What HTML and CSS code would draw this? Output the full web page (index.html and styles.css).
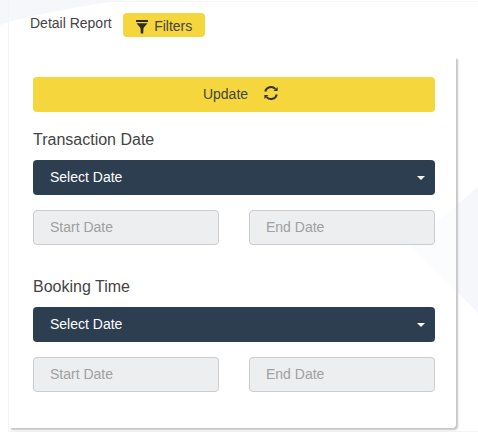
FILE: index.html
```html
<!DOCTYPE html>
<html lang="en">
<head>
    <meta charset="UTF-8">
    <title>Detail Report</title>
    <link rel="stylesheet" href="styles.css">
</head>
<body>
    <svg class="bg-shape" width="478" height="445" viewBox="0 0 478 445">
        <path d="M0 0H125C80 6 35 14 0 25Z" fill="#f6f7fa"></path>
        <polygon points="478,187 410,245 478,313" fill="#f6f7fb"></polygon>
    </svg>
    <div class="panel">
        <div class="tabs">
            <span class="tab-title">Detail Report</span>
            <button class="btn-filters">
                <svg class="icon-filter" width="12" height="14" viewBox="0 0 12 14">
                    <rect x="0" y="0" width="12" height="2" fill="#2b2b2b"></rect>
                    <polygon points="0.5,3.2 11.5,3.2 7.5,8 7.2,13.5 4.8,13.5 4.5,8" fill="#2b2b2b"></polygon>
                </svg>
                <span>Filters</span>
            </button>
        </div>
        <div class="card">
            <button class="btn-update">
                <span>Update</span>
                <svg class="icon-sync" width="16" height="16" viewBox="0 0 16 16">
                    <path d="M2.2 6.6A6 6 0 0 1 12.4 3.9" fill="none" stroke="#333" stroke-width="2"></path>
                    <polygon points="14.6,1.9 14.6,5.9 10.6,5.9" fill="#333"></polygon>
                    <path d="M13.8 9.4A6 6 0 0 1 3.6 12.1" fill="none" stroke="#333" stroke-width="2"></path>
                    <polygon points="1.4,14.1 1.4,10.1 5.4,10.1" fill="#333"></polygon>
                </svg>
            </button>

            <div class="group">
                <div class="group-label">Transaction Date</div>
                <div class="select">Select Date<span class="caret"></span></div>
                <div class="date-row">
                    <input class="date-input" placeholder="Start Date" disabled>
                    <input class="date-input" placeholder="End Date" disabled>
                </div>
            </div>

            <div class="group">
                <div class="group-label">Booking Time</div>
                <div class="select">Select Date<span class="caret"></span></div>
                <div class="date-row">
                    <input class="date-input" placeholder="Start Date" disabled>
                    <input class="date-input" placeholder="End Date" disabled>
                </div>
            </div>
        </div>
    </div>
</body>
</html>
```

FILE: styles.css
```css
* {
    margin: 0;
    padding: 0;
    box-sizing: border-box;
}

html,
body {
    height: 445px;
    overflow: hidden;
}

body {
    background: #fff;
    font-family: "Liberation Sans", Arial, sans-serif;
    font-size: 14px;
    color: #444;
    position: relative;
}

.bg-shape {
    position: absolute;
    left: 0;
    top: 0;
}

.panel {
    position: relative;
    margin: 1px 0 0 8px;
    width: 470px;
    height: 431px;
    border-top: 1px solid #f6f6f8;
    border-left: 1px solid #f4f4f6;
    border-bottom: 1px solid #f4f4f6;
}

.tabs {
    height: 55px;
    padding: 11px 0 0 21px;
    display: flex;
    align-items: flex-start;
    gap: 11px;
}

.tab-title {
    line-height: 20px;
}

.btn-filters {
    width: 82px;
    height: 24px;
    padding-top: 1px;
    border: 0;
    border-radius: 4px;
    background: #f5d63d;
    font: 14px "Liberation Sans", Arial, sans-serif;
    color: #444;
    display: flex;
    align-items: center;
    justify-content: center;
    gap: 6px;
}

.icon-filter {
    margin: 2px 0 0 1px;
}

.card {
    width: 447px;
    height: 371px;
    background: rgba(255, 255, 255, 0.6);
    border-radius: 0 0 4px 0;
    box-shadow: 2px 2px 2px #c4c4c4;
    clip-path: inset(0 -6px -6px 0);
    padding: 20px 20px 0 24px;
}

.btn-update {
    width: 402px;
    height: 35px;
    padding: 0 0 1px 14px;
    border: 0;
    border-radius: 4px;
    background: #f5d63d;
    font: 14px "Liberation Sans", Arial, sans-serif;
    color: #444;
    display: flex;
    align-items: center;
    justify-content: center;
    gap: 15px;
}

.icon-sync {
    margin-top: -2px;
}

.group {
    width: 402px;
    margin-top: 18px;
}

.group + .group {
    margin-top: 32px;
}

.group-label {
    font-size: 16px;
    line-height: 20px;
    margin-bottom: 10px;
}

.select {
    position: relative;
    height: 35px;
    line-height: 35px;
    padding-left: 17px;
    border-radius: 4px;
    background: #2c3e50;
    color: #fff;
}

.caret {
    position: absolute;
    right: 10px;
    top: 16px;
    border-top: 4px solid #fff;
    border-left: 4px solid transparent;
    border-right: 4px solid transparent;
}

.date-row {
    display: flex;
    justify-content: space-between;
    margin-top: 15px;
}

.date-input {
    width: 186px;
    height: 35px;
    padding: 0 0 2px 16px;
    border: 1px solid #ccc;
    border-radius: 4px;
    background: #eceef0;
    font: 14px "Liberation Sans", Arial, sans-serif;
}

.date-input::placeholder {
    color: #a0a0a0;
    opacity: 1;
}
```
